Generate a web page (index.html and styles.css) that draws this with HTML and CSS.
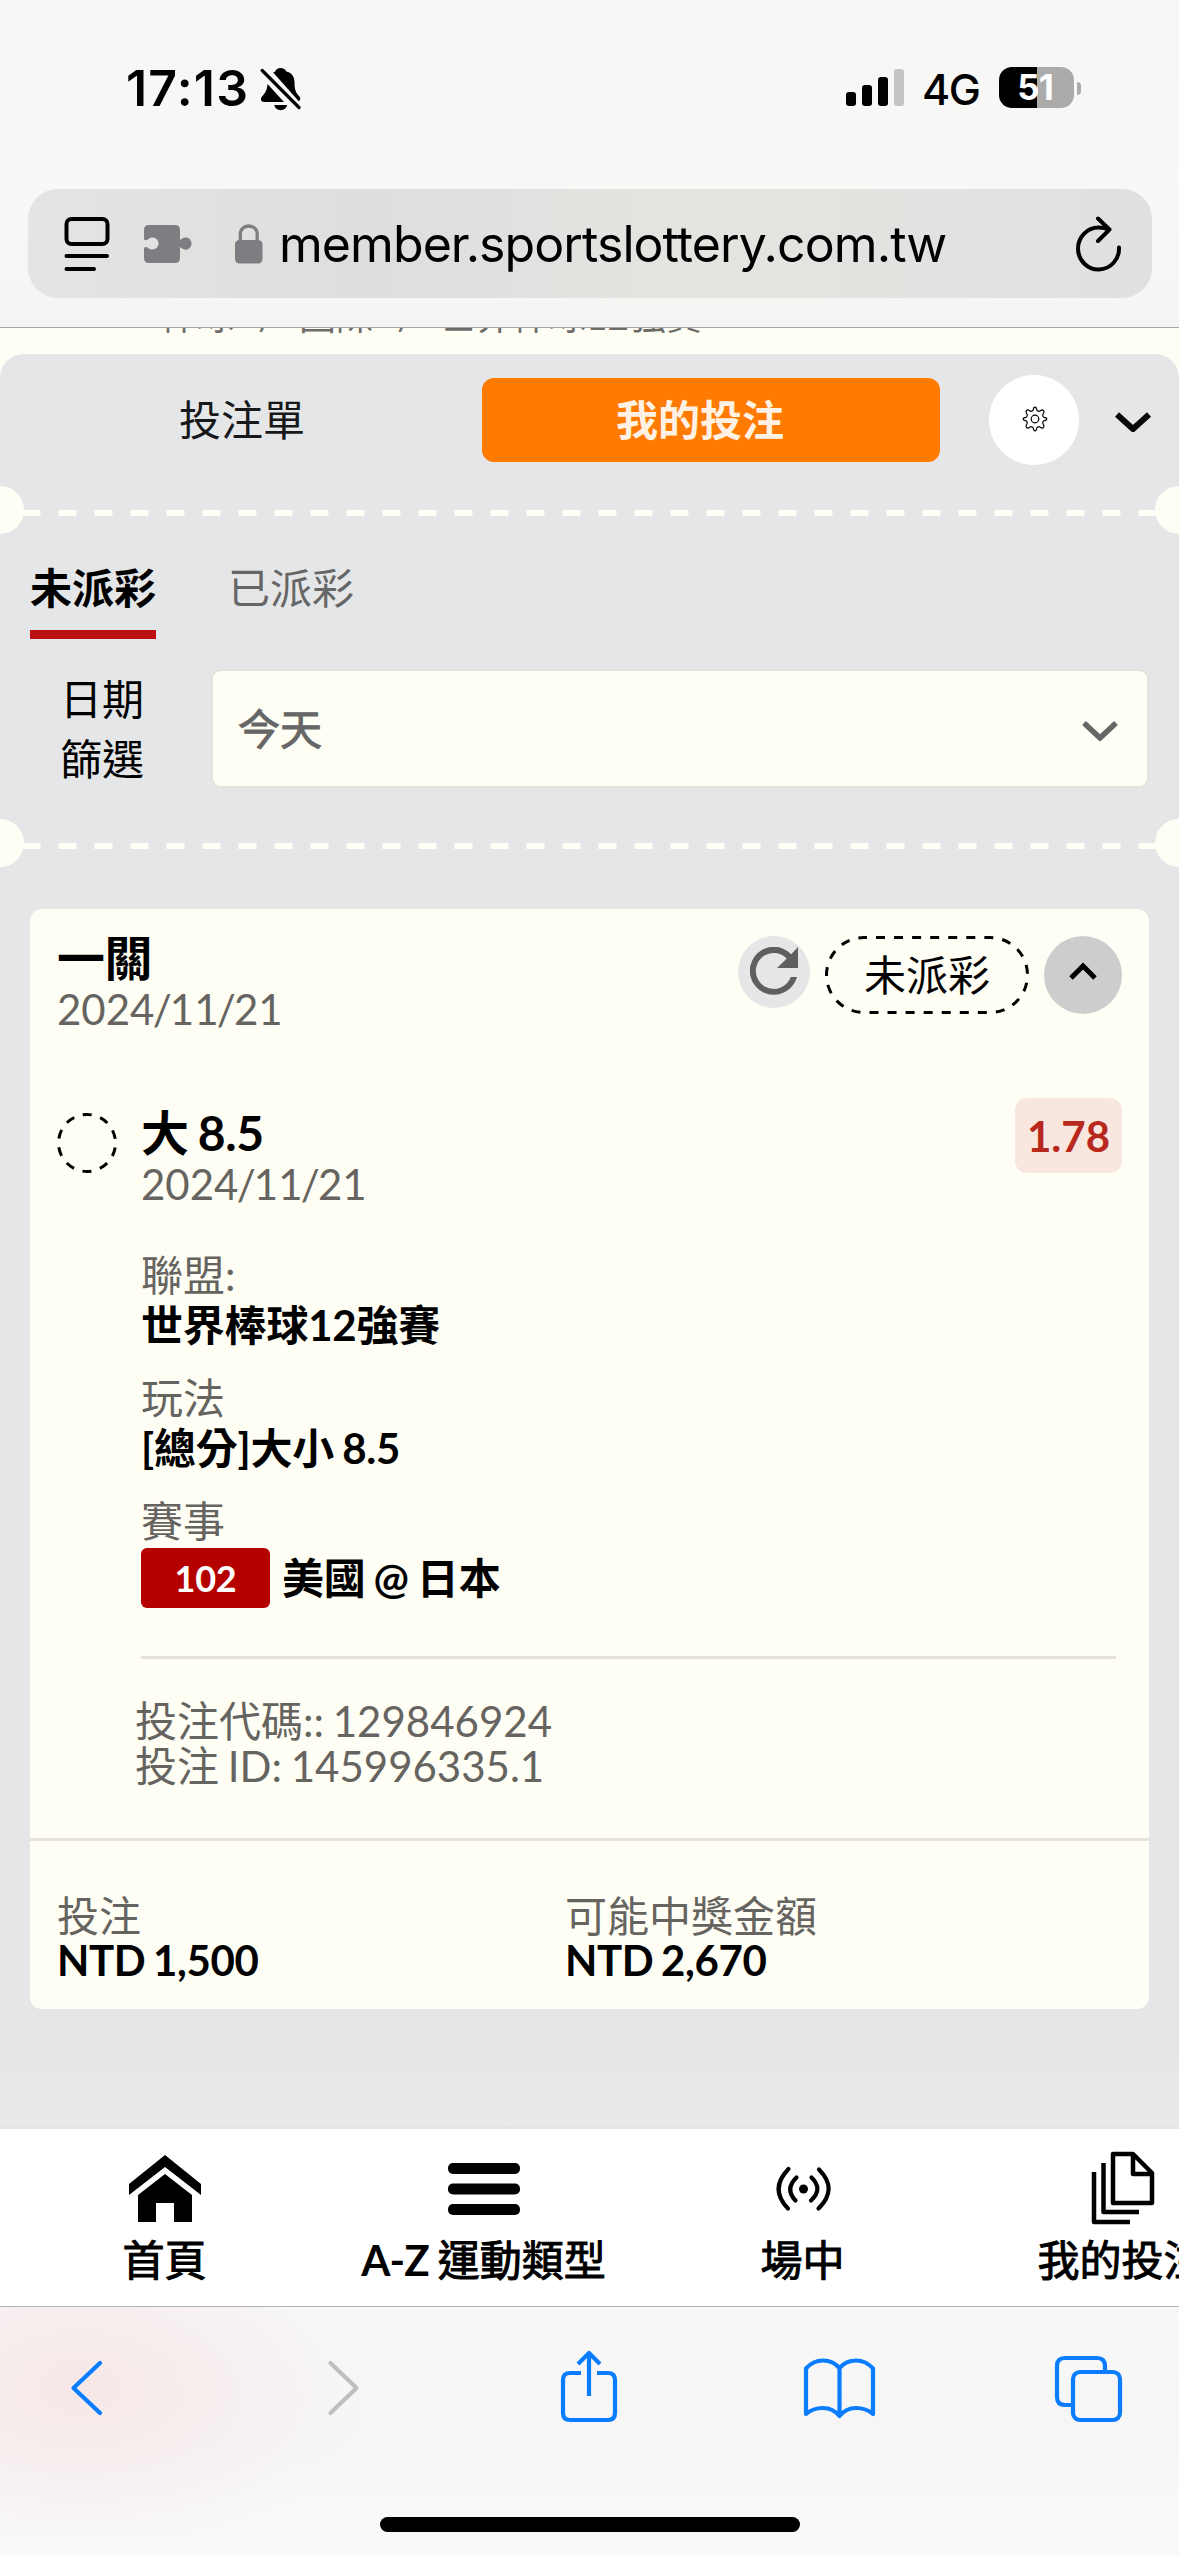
FILE: index.html
```html
<!DOCTYPE html>
<html lang="zh-Hant">
<head>
<meta charset="utf-8">
<title>我的投注</title>
<link rel="stylesheet" href="styles.css">
</head>
<body>
<header class="browser-top">
  <div class="status">
    <span class="clock">17:13</span>
    <svg class="bell" width="42" height="44" viewBox="0 0 42 44">
      <path d="M20.500 1c-2.600 0-4.600 1.300-5.300 3.400l-2 1.100L38.500 34c2.400-.8 2.200-3 .8-4.600-3.300-3.600-4.800-6-4.800-14.400 0-5.700-3.200-9.500-8.200-10.600C25.500 2.300 23.200 1 20.500 1z M7.500 17L24 35H4.200C1 35 0 32 2 29.500c3.300-3.700 5.200-6.500 5.500-12.500z M14.200 38h13c-.6 3-3.200 5.200-6.500 5.200s-5.900-2.200-6.500-5.200z"/>
      <path d="M2.500 3.800L39 40.500" stroke="#f6f6f5" stroke-width="7.500" fill="none"/>
      <path d="M2.200 3.500L39 40.500" stroke="#000" stroke-width="3.200" stroke-linecap="round" fill="none"/>
    </svg>
    <svg class="signal" width="58" height="37" viewBox="0 0 58 37">
      <rect x="0" y="23" width="10" height="14" rx="3"/><rect x="16" y="16" width="10" height="21" rx="3"/><rect x="32" y="8" width="10" height="29" rx="3"/><rect x="48" y="0" width="10" height="37" rx="3" fill="#c4c4c3"/>
    </svg>
    <span class="network">4G</span>
    <span class="battery">51</span>
    <span class="battery-tip"></span>
  </div>
  <div class="address">
    <svg class="page-icon" width="46" height="56" viewBox="0 0 46 56" fill="none" stroke="#000" stroke-width="4" stroke-linecap="round">
      <rect x="2.500" y="3" width="41" height="25" rx="5"/><path d="M2.500 40H43M2.500 53H30"/>
    </svg>
    <svg class="puzzle" width="48" height="40" viewBox="0 0 48 40" fill="#7e7e82">
      <path d="M5 1h26q5 0 5 5v10c2.500-2 4-2.500 6-2.500 3 0 5.500 2.700 5.500 6s-2.500 6.200-5.500 6.200c-2 0-3.500-.7-6-2.700V34q0 5-5 5H5q-5 0-5-5v-10q2-2 4.500.2c1.200 1 2.500 1.200 4 1.200 3.200 0 6-2.600 6-5.900s-2.800-5.900-6-5.900c-1.500 0-2.800.3-4 1.300Q2 17 0 15.500V6q0-5 5-5z"/>
    </svg>
    <svg class="lock" width="28" height="40" viewBox="0 0 28 40" fill="#7e7e82">
      <rect x="0" y="16" width="27.500" height="23.500" rx="4.500"/><path d="M5.300 17v-6.500C5.300 5 9 2 13.700 2s8.500 3 8.500 8.500V17" fill="none" stroke="#7e7e82" stroke-width="3.300"/>
    </svg>
    <span class="url">member.sportslottery.com.tw</span>
    <svg class="reload" width="46" height="56" viewBox="0 0 46 56" fill="none" stroke="#000" stroke-width="4" stroke-linecap="round" stroke-linejoin="round">
      <path d="M43 31.500A20.500 21 0 1 1 22.500 11.500Q28 11.500 33.500 13.500M22 2.500L33.500 13.500L22 25"/>
    </svg>
  </div>
</header>

<div class="crumbs"><span>棒球</span><i>/</i><span>國際</span><i>/</i><span>世界棒球12強賽</span></div>

<main class="panel">
  <div class="switcher">
    <span class="slip">投注單</span>
    <span class="mine">我的投注</span>
    <span class="gear">
      <svg width="26" height="26" viewBox="0 0 26 26" fill="none" stroke="#000" stroke-width="1.200" stroke-linejoin="round">
        <circle cx="13" cy="13" r="3.800"/>
        <path d="M11.300 3.800Q11.600 1.200 13 1.200T14.700 3.800Q15.100 5 16.200 5.200Q17.300 5.500 18.300 4.700Q20.300 3.200 21.500 4.500T21.300 7.700Q20.500 8.700 20.800 9.800Q21.100 11 22.200 11.300Q24.800 11.600 24.800 13T22.200 14.700Q21.100 15 20.800 16.200Q20.500 17.300 21.300 18.300Q22.700 20.200 21.500 21.500T18.300 21.300Q17.300 20.500 16.200 20.800Q15.100 21 14.700 22.200Q14.400 24.800 13 24.800T11.300 22.200Q10.900 21 9.800 20.800Q8.700 20.500 7.700 21.300Q5.700 22.700 4.500 21.500T4.700 18.300Q5.500 17.300 5.200 16.200Q4.900 15 3.800 14.700Q1.200 14.400 1.200 13T3.800 11.300Q4.900 11 5.200 9.800Q5.500 8.700 4.700 7.700Q3.300 5.800 4.500 4.500T7.700 4.700Q8.700 5.500 9.800 5.200Q10.900 5 11.300 3.800z"/>
      </svg>
    </span>
    <svg class="collapse" width="36" height="20" viewBox="0 0 36 20" fill="none" stroke="#0a0a0a" stroke-width="6"><path d="M2 2.500L18 17L34 2.500"/></svg>
  </div>
  <div class="tear"></div>
  <nav class="tabs"><span class="tab active">未派彩</span><span class="tab">已派彩</span></nav>
  <div class="filter">
    <span class="filter-label">日期<br>篩選</span>
    <div class="select"><span class="medium">今天</span>
      <svg width="36" height="20" viewBox="0 0 36 20" fill="none" stroke="#666" stroke-width="5.500"><path d="M2 2L18 17L34 2"/></svg>
    </div>
  </div>
  <div class="tear second"></div>

  <section class="card">
    <div class="card-head">
      <div class="head-text"><div class="title">一關</div><div class="muted day">2024<i>/</i>11<i>/</i>21</div></div>
      <span class="refresh">
        <svg width="48" height="48" viewBox="0 0 48 48"><path d="M41.200 7.200A24 24 0 1 0 47 30H40.800A18 18 0 1 1 36.800 11.400L27 21H48V0z" fill="#5d5f61"/></svg>
      </span>
      <span class="pill">
        <svg width="204" height="78" viewBox="0 0 204 78" fill="none" stroke="#000" stroke-width="3"><rect x="1.500" y="1.500" width="201" height="75" rx="37.500" stroke-dasharray="9 9.060" stroke-dashoffset="-12"/></svg>
        <span>未派彩</span>
      </span>
      <span class="fold"><svg width="28" height="18" viewBox="0 0 28 18" fill="none" stroke="#000" stroke-width="5"><path d="M2 16L14 4L26 16"/></svg></span>
    </div>
    <div class="bet">
      <svg class="ring" width="60" height="60" viewBox="0 0 60 60" fill="none" stroke="#000" stroke-width="3"><circle cx="30" cy="30" r="28.500" stroke-dasharray="9 8.907" stroke-dashoffset="-4.450"/></svg>
      <div class="bet-body">
        <div class="bet-top">
          <div><div class="title">大 8.5</div><div class="muted day">2024<i>/</i>11<i>/</i>21</div></div>
          <span class="odds">1.78</span>
        </div>
        <dl class="facts">
          <dt>聯盟:</dt><dd>世界棒球12強賽</dd>
          <dt>玩法</dt><dd>[總分]大小 8.5</dd>
          <dt>賽事</dt><dd class="match"><span class="code">102</span><span>美國 @ 日本</span></dd>
        </dl>
        <div class="ids"><div>投注代碼:: 129846924</div><div>投注 ID: 145996335.1</div></div>
      </div>
    </div>
    <div class="totals">
      <div><div class="muted">投注</div><b>NTD 1,500</b></div>
      <div><div class="muted">可能中獎金額</div><b>NTD 2,670</b></div>
    </div>
  </section>
</main>

<nav class="bottom-nav">
  <a><svg width="72" height="68" viewBox="0 0 72 68"><path d="M36 0L72 29V40L36 12L0 40V29z M36 19L63 40V67H45V48H27V67H9V40z"/></svg>首頁</a>
  <a><svg width="72" height="68" viewBox="0 0 72 68"><rect y="8" width="72" height="11" rx="5"/><rect y="28.500" width="72" height="11" rx="5"/><rect y="49" width="72" height="11" rx="5"/></svg><span><b>A-Z</b> 運動類型</span></a>
  <a><svg width="72" height="68" viewBox="0 0 72 68" fill="none" stroke="#000" stroke-width="4.200" stroke-linecap="round"><circle cx="36.500" cy="34" r="4.500" fill="#000" stroke="none"/><path d="M29.500 22.500Q17.500 34 28.500 45.500M44.500 22.500Q56.500 34 44 45.500M21.500 14Q2 34 21 53.500M52 14.500Q71.500 34 51.500 53.500"/></svg>場中</a>
  <a><svg width="72" height="68" viewBox="0 2 72 68" fill="none" stroke="#000" stroke-width="4.500" stroke-linejoin="round"><path d="M27 1H47L66 20V50H27z M47 1V21H66M17.500 10V59H53M8 19V69H44"/></svg>我的投注</a>
</nav>

<footer class="toolbar">
  <svg width="1179" height="190" viewBox="0 0 1179 190" fill="none" stroke="#0a7dff" stroke-width="4.200" stroke-linecap="round" stroke-linejoin="round">
    <path d="M100 56L73.500 81L100 106"/>
    <path d="M330.500 56L356.500 81L330.500 106" stroke="#bfbfbf"/>
    <path d="M581 66H570Q563 66 563 73V106Q563 113 570 113H608Q615 113 615 106V73Q615 66 608 66H597M589 89V46M578 57L589 46L600 57" stroke-linecap="butt"/>
    <path d="M839.500 61Q833 53.500 823 53.500T806 61.500V107Q813 101 823 101T839.500 109Q846 101 856 101T873 107V61.500Q866 53.500 856 53.500T839.500 61V109"/>
    <rect x="1073" y="65" width="47" height="48" rx="7"/>
    <path d="M1073 98H1065Q1057 98 1057 90V59Q1057 51 1065 51H1097Q1105 51 1105 59V65" stroke-linecap="butt"/>
  </svg>
  <span class="home-bar"></span>
</footer>
</body>
</html>
```
FILE: styles.css
```css
* { box-sizing: border-box; }
body {
  margin: 0; width: 1179px; height: 2556px; overflow: hidden;
  display: flex; flex-direction: column;
  background: #fffef5; color: #000;
  font: 42px/48px Lato, "Noto Sans CJK TC", sans-serif;
  word-spacing: -2px;
}
svg { display: block; flex: none; }

/* browser chrome */
.browser-top {
  height: 328px; flex: none; border-bottom: 1px solid #a5a5a4;
  background: linear-gradient(#f6f6f5, #f8f8f6 55%, #f5f5f4);
  font-family: Inter, sans-serif;
}
.status { height: 189px; display: flex; align-items: flex-start; padding: 58px 98px 0 126px; }
.clock { width: 134px; font-size: 50px; line-height: 60px; font-weight: 600; letter-spacing: 1.2px; }
.bell { margin-top: 9px; }
.signal { margin: 11px 18px 0 auto; }
.network { width: 77px; line-height: 62px; font-size: 43px; font-weight: 500; letter-spacing: -1.5px; }
.battery {
  width: 75px; height: 41px; margin-top: 9px; padding-right: 3px; border-radius: 13px; text-align: center;
  background: linear-gradient(90deg, #000 51%, #ababaa 51%);
  color: #fff; font-size: 35px; line-height: 41px; font-weight: 700; letter-spacing: -1px;
}
.battery-tip { width: 4px; height: 13px; margin: 24px 0 0 3px; border-radius: 0 5px 5px 0; background: #ababaa; }
.address {
  height: 109px; margin: 0 27px 0 28px; padding: 0 30px 0 36px; border-radius: 30px;
  display: flex; align-items: center;
  background: linear-gradient(90deg, #e4e4e2, #dededd 30%, #e5e4e1 60%, #e0e0df);
}
.puzzle { margin-left: 34px; }
.lock { margin-left: 43px; }
.url { margin-left: 16px; font-size: 50px; letter-spacing: -.93px; white-space: nowrap; }
.reload { margin-left: auto; }

.crumbs {
  height: 26px; flex: none; padding-left: 160px; overflow: hidden;
  display: flex; align-items: flex-end; color: #6d6c69; font-size: 37px; line-height: 76px;
  white-space: nowrap;
}
.crumbs i { width: 65px; text-align: center; font-style: normal; }

/* coupon panel */
.panel {
  height: 1772px; flex: none; border-radius: 24px 24px 0 0;
  background: linear-gradient(#e4e6e8 95.500%, #e8e9eb);
}
.switcher { height: 132px; display: flex; align-items: center; }
.slip { width: 482px; padding-left: 2px; text-align: center; color: #17181a; }
.mine {
  width: 458px; height: 84px; line-height: 84px; padding-right: 22px; border-radius: 12px;
  text-align: center; background: #ff7a00; color: #fff2e4; font-weight: 700;
}
.gear {
  width: 90px; height: 90px; margin-left: 49px; padding: 0 0 3px 2px; border-radius: 50%; background: #fff;
  display: flex; align-items: center; justify-content: center;
}
.collapse { margin: 4px 0 0 36px; }
.tear {
  position: relative; height: 6px; margin-top: 24px;
  background: repeating-linear-gradient(90deg, #fffef5 0 18px, transparent 18px 36px) 22.500px 0;
}
.tear::before, .tear::after {
  content: ""; position: absolute; top: -24px; width: 24px; height: 48px; background: #fffef5;
}
.tear::before { left: 0; border-radius: 0 24px 24px 0; }
.tear::after { right: 0; border-radius: 24px 0 0 24px; }
.tear.second { margin-top: 55px; }
.tabs { display: flex; gap: 72px; margin: 42px 0 0 30px; }
.tab { height: 81px; line-height: 60px; color: #666; }
.tab.active { border-bottom: 9px solid #bd1013; color: #000; font-weight: 700; }
.filter { height: 119px; margin-top: 30px; display: flex; align-items: center; padding-right: 30px; }
.filter-label { width: 211px; padding-right: 7px; text-align: center; line-height: 60px; }
.select {
  flex: 1; height: 119px; padding: 0 29px 0 25px; border: 2px solid #e5e2dc; border-radius: 10px;
  display: flex; align-items: center; justify-content: space-between;
  background: #fffef5; color: #666;
}
.select svg { margin-top: 4px; }
.medium { -webkit-text-stroke: 1px currentColor; }

/* bet card */
.card { width: 1119px; height: 1100px; margin: 60px 0 0 30px; border-radius: 12px; background: #fffef5; }
.card-head { display: flex; align-items: flex-start; padding: 27px 27px 0 27px; }
.head-text { margin-top: -2px; flex: 1; }
.title { font-size: 48px; line-height: 48px; font-weight: 700; letter-spacing: -.4px; }
.muted { color: #666460; }
.day { margin-top: 3px; }
.day i { margin: 0 -1.8px; font-style: normal; }
.refresh {
  width: 72px; height: 72px; padding: 11px 12px; border-radius: 50%; background: #e4e6e8;
}
.pill { display: grid; width: 204px; height: 78px; margin: 0 15px; line-height: 79px; text-align: center; }
.pill > * { grid-area: 1 / 1; }
.fold {
  width: 78px; height: 78px; border-radius: 50%; background: #cdcdcd; padding-bottom: 9px;
  display: flex; align-items: center; justify-content: center;
}
.bet { display: flex; align-items: flex-start; margin-top: 76px; padding-left: 27px; }
.ring { margin-top: 4px; }
.bet-body { flex: 1; margin-left: 24px; }
.bet-top { display: flex; justify-content: space-between; align-items: flex-start; padding-right: 27px; }
.odds {
  width: 107px; height: 75px; margin-top: -11px; border-radius: 12px; text-align: center;
  line-height: 77px; background: #f8e6df; color: #b8281c; font-weight: 700;
}
.facts { margin: 42px 33px 0 0; padding-bottom: 48px; border-bottom: 3px solid #e5e2dc; line-height: 50px; }
.facts dt { color: #666460; }
.facts dd { margin: 0 0 23px; font-weight: 700; letter-spacing: -.2px; }
.facts .match { display: flex; align-items: center; gap: 12px; height: 60px; margin: 2px 0 0; }
.code {
  width: 129px; height: 60px; line-height: 60px; border-radius: 6px; text-align: center;
  background: #b50000; color: #fff; font-size: 36px;
}
.ids { margin: 40px 0 0 -6px; line-height: 45px; color: #666460; }
.totals {
  display: grid; grid-template-columns: 508px 1fr; margin-top: 49px; padding: 53px 27px 0;
  border-top: 3px solid #e5e2dc; line-height: 44px;
}
.totals b { letter-spacing: -.4px; }

/* site navigation */
.bottom-nav {
  height: 181px; flex: none; padding: 29px 0 0 5px; border-top: 3px solid #e5e5e5; border-bottom: 1px solid #b4b4b4;
  display: grid; grid-template-columns: repeat(4, 319px); background: #fff;
}
.bottom-nav a {
  display: flex; flex-direction: column; align-items: center; white-space: nowrap;
  -webkit-text-stroke: 1px currentColor;
}
.bottom-nav b { -webkit-text-stroke: 0; letter-spacing: -.8px; }
.bottom-nav svg { height: 68px; overflow: visible; margin: -3px 0 13px; }

.toolbar {
  flex: 1; display: flex; flex-direction: column; align-items: center;
  background: radial-gradient(ellipse 290px 170px at 80px 80px, #f6e7e7, #f6e7e700), linear-gradient(#f8f8f8, #f6f6f6 50%, #fafafa);
}
.home-bar { width: 420px; height: 15px; margin-top: 20px; border-radius: 8px; background: #000; }
```
